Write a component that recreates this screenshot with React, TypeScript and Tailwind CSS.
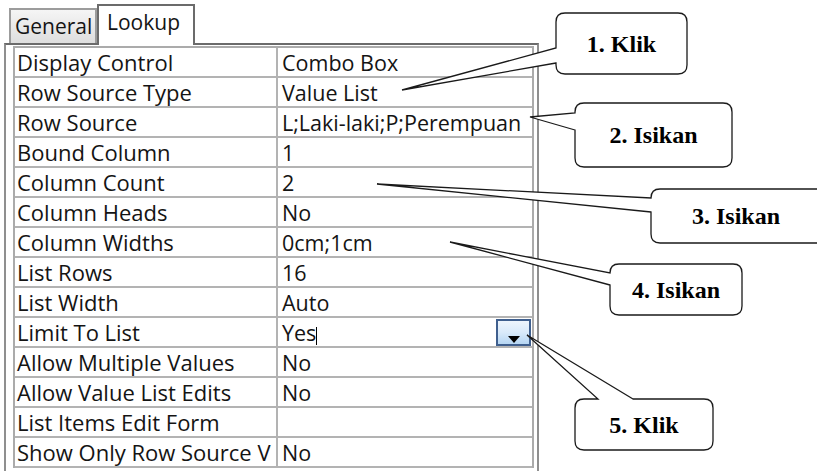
import React from 'react';

const rows: [string, string][] = [
  ['Display Control', 'Combo Box'],
  ['Row Source Type', 'Value List'],
  ['Row Source', 'L;Laki-laki;P;Perempuan'],
  ['Bound Column', '1'],
  ['Column Count', '2'],
  ['Column Heads', 'No'],
  ['Column Widths', '0cm;1cm'],
  ['List Rows', '16'],
  ['List Width', 'Auto'],
  ['Limit To List', 'Yes'],
  ['Allow Multiple Values', 'No'],
  ['Allow Value List Edits', 'No'],
  ['List Items Edit Form', ''],
  ['Show Only Row Source V', 'No'],
];

// callout outline with the wedge coming out of the left side
function leftCallout(x1: number, y1: number, x2: number, y2: number, wa: number, wb: number, tx: number, ty: number, r = 9) {
  return `M ${x1} ${wb} L ${tx} ${ty} L ${x1} ${wa} L ${x1} ${y1 + r} Q ${x1} ${y1} ${x1 + r} ${y1} L ${x2 - r} ${y1} Q ${x2} ${y1} ${x2} ${y1 + r} L ${x2} ${y2 - r} Q ${x2} ${y2} ${x2 - r} ${y2} L ${x1 + r} ${y2} Q ${x1} ${y2} ${x1} ${y2 - r} Z`;
}

// callout outline with the wedge coming out of the top side
function topCallout(x1: number, y1: number, x2: number, y2: number, wa: number, wb: number, tx: number, ty: number, r = 9) {
  return `M ${wb} ${y1} L ${tx} ${ty} L ${wa} ${y1} L ${x1 + r} ${y1} Q ${x1} ${y1} ${x1} ${y1 + r} L ${x1} ${y2 - r} Q ${x1} ${y2} ${x1 + r} ${y2} L ${x2 - r} ${y2} Q ${x2} ${y2} ${x2} ${y2 - r} L ${x2} ${y1 + r} Q ${x2} ${y1} ${x2 - r} ${y1} Z`;
}

function DropButton() {
  return (
    <div className="ml-auto mr-[1px] mt-[1px] flex h-[27px] w-[35px] shrink-0 items-end justify-center border-2 border-[#3f5f8e] bg-gradient-to-b from-[#eef5fc] via-[#d9eafa] to-[#b6d6f3]">
      <svg width="14" height="9" viewBox="0 0 14 9">
        <path d="M1 1 H13 L7 8 Z" fill="#000" />
      </svg>
    </div>
  );
}

function App() {
  return (
    <div className="relative h-[471px] w-[817px] overflow-hidden bg-white font-['Open_Sans',sans-serif] text-[#141414]">
      {/* Tabs */}
      <div className="flex h-[43px] items-end pl-[9px]">
        <div className="h-[35px] w-[88px] border-2 border-b-0 border-[#9c9c9c] bg-gradient-to-b from-[#f5f5f5] to-[#dedede] pl-[4px] text-[21px] leading-[33px]">
          General
        </div>
        <div className="relative z-10 -mb-[2px] h-[41px] w-[98px] border-2 border-b-0 border-[#6b6b6b] bg-white pl-[8px] text-[21px] leading-[33px]">
          Lookup
        </div>
      </div>

      {/* Property sheet */}
      <div className="ml-[4px] h-[428px] w-[535px] border-2 border-b-0 border-[#8f8f8f] border-t-[#6b6b6b] pl-[7px] pt-[1px]">
        <div className="w-[521px] border-2 border-b-0 border-[#ababab]">
          {rows.map(([label, value]) => (
            <div key={label} className="flex h-[30px] border-b-2 border-[#b3b3b3]">
              <div className="w-[263px] shrink-0 overflow-hidden whitespace-nowrap border-r-2 border-[#b3b3b3] pl-[2px] text-[22px] leading-[29px]">
                {label}
              </div>
              <div className="flex flex-1 items-start whitespace-nowrap pl-[4px] text-[21.5px] leading-[29px]">
                {value}
                {label === 'Limit To List' && (
                  <>
                    <span className="mt-[9px] h-[18px] w-px bg-black" />
                    <DropButton />
                  </>
                )}
              </div>
            </div>
          ))}
        </div>
      </div>

      {/* Callout outlines */}
      <svg className="pointer-events-none absolute inset-0" width="817" height="471" viewBox="0 0 817 471">
        <g fill="#fff" stroke="#1a1a1a" strokeWidth="1.3" strokeLinejoin="miter">
          <path d={leftCallout(556, 13, 687, 74, 48, 63, 402, 90)} />
          <path d={leftCallout(575, 103, 732, 167, 113, 130, 530, 117)} />
          <path d={leftCallout(651, 189, 830, 243, 198, 212, 377, 184)} />
          <path d={leftCallout(610, 264, 742, 315, 273, 285, 450, 242)} />
          <path d={topCallout(575, 399, 713, 450, 598, 633, 527, 335)} />
        </g>
      </svg>

      {/* Callout labels */}
      <div className="absolute left-[556px] top-[13px] flex h-[61px] w-[131px] items-center justify-center font-['Liberation_Serif',serif] text-[24px] font-bold text-black">
        1. Klik
      </div>
      <div className="absolute left-[575px] top-[103px] flex h-[64px] w-[157px] items-center justify-center font-['Liberation_Serif',serif] text-[24px] font-bold text-black">
        2. Isikan
      </div>
      <div className="absolute left-[651px] top-[189px] flex h-[54px] w-[170px] items-center justify-center font-['Liberation_Serif',serif] text-[24px] font-bold text-black">
        3. Isikan
      </div>
      <div className="absolute left-[610px] top-[264px] flex h-[51px] w-[132px] items-center justify-center font-['Liberation_Serif',serif] text-[24px] font-bold text-black">
        4. Isikan
      </div>
      <div className="absolute left-[575px] top-[399px] flex h-[51px] w-[138px] items-center justify-center font-['Liberation_Serif',serif] text-[24px] font-bold text-black">
        5. Klik
      </div>
    </div>
  );
}

export default App;
